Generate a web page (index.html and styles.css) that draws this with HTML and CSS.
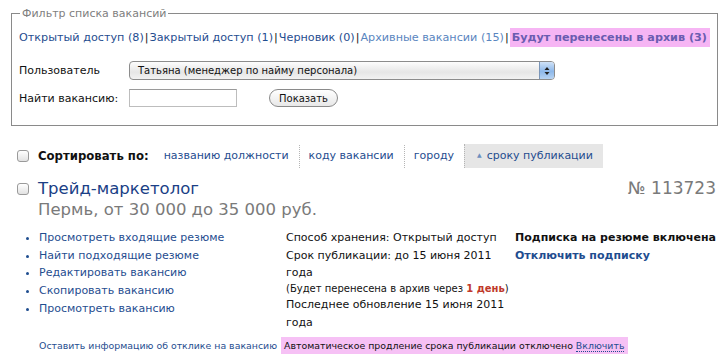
FILE: index.html
```html
<!DOCTYPE html>
<html lang="ru">
<head>
  <meta charset="UTF-8">
  <title>Вакансии</title>
  <link rel="stylesheet" href="styles.css">
</head>
<body>
<div class="page">

  <!-- Filter -->
  <fieldset class="filter">
    <legend>Фильтр списка вакансий</legend>
    <div class="tabs">
      <a href="#">Открытый доступ (8)</a><span class="sep">|</span><a href="#">Закрытый доступ (1)</a><span class="sep">|</span><a href="#">Черновик (0)</a><span class="sep">|</span><a href="#" class="archive">Архивные вакансии (15)</a><span class="sep">|</span><a href="#" class="soon">Будут перенесены в архив (3)</a>
    </div>
    <div class="field">
      <label>Пользователь</label>
      <div class="select">
        <span class="value">Татьяна (менеджер по найму персонала)</span>
        <span class="arrows">
          <svg width="6" height="10" viewBox="0 0 6 10"><path d="M3 1 L5.5 4 H0.5 Z M3 9 L5.5 6 H0.5 Z" fill="#222"/></svg>
        </span>
      </div>
    </div>
    <div class="field">
      <label>Найти вакансию:</label>
      <input type="text" class="search">
      <button class="btn">Показать</button>
    </div>
  </fieldset>

  <!-- Sort -->
  <div class="sort">
    <span class="check"></span>
    <b class="sort-label">Сортировать по:</b>
    <a href="#" class="sort-item">названию должности</a>
    <a href="#" class="sort-item">коду вакансии</a>
    <a href="#" class="sort-item">городу</a>
    <a href="#" class="sort-item active"><span class="tri">&#9650;</span>сроку публикации</a>
  </div>

  <!-- Vacancy -->
  <div class="vacancy">
    <div class="vac-head">
      <span class="check"></span>
      <div class="vac-title">
        <a href="#" class="title">Трейд-маркетолог</a>
        <div class="sub">Пермь, от 30 000 до 35 000 руб.</div>
      </div>
      <div class="num">№ 113723</div>
    </div>

    <div class="vac-body">
      <ul class="actions">
        <li><a href="#">Просмотреть входящие резюме</a></li>
        <li><a href="#">Найти подходящие резюме</a></li>
        <li><a href="#">Редактировать вакансию</a></li>
        <li><a href="#">Скопировать вакансию</a></li>
        <li><a href="#">Просмотреть вакансию</a></li>
      </ul>
      <div class="info">
        <p>Способ хранения: Открытый доступ</p>
        <p>Срок публикации: до 15 июня 2011 года</p>
        <p class="note">(Будет перенесена в архив через <b class="red">1 день</b>)</p>
        <p>Последнее обновление 15 июня 2011 года</p>
      </div>
      <div class="subscr">
        <b>Подписка на резюме включена</b>
        <a href="#">Отключить подписку</a>
      </div>
    </div>

    <div class="vac-foot">
      <a href="#" class="feedback">Оставить информацию об отклике на вакансию</a>
      <span class="autoext">Автоматическое продление срока публикации отключено <a href="#">Включить</a></span>
    </div>
  </div>

</div>
</body>
</html>
```

FILE: styles.css
```css
body {
  margin: 0;
  background: #fff;
  font-family: "DejaVu Sans", Verdana, sans-serif;
  font-size: 11px;
  color: #111;
}
a {
  color: #1f4d8f;
  text-decoration: none;
}
.page {
  padding: 7px 11px 0 11px;
}

/* Filter */
.filter {
  margin: 0;
  border: 1px solid #8a8a8a;
  padding: 8px 7px 18px 7px;
}
.filter legend {
  color: #808080;
  padding: 0 2px;
  margin-left: 1px;
}
.tabs {
  display: flex;
  align-items: center;
  white-space: nowrap;
  font-size: 11.2px;
}
.tabs .sep {
  color: #111;
  padding: 0 1px;
}
.tabs .archive {
  color: #5a86c0;
}
.tabs .soon {
  background: #f6b5f4;
  color: #6a5cb0;
  font-weight: bold;
  padding: 3px 3px 3px 2px;
}
.field {
  display: flex;
  align-items: center;
  margin-top: 9px;
}
.tabs + .field {
  margin-top: 14px;
}
.field label {
  width: 110px;
}
.select {
  display: flex;
  align-items: center;
  width: 424px;
  height: 17px;
  border: 1px solid #8c8c8c;
  border-radius: 4px;
  background: linear-gradient(#fdfdfd, #e6e6e6 60%, #f2f2f2);
  font-size: 10px;
  overflow: hidden;
}
.select .value {
  flex: 1;
  padding-left: 8px;
}
.arrows {
  display: flex;
  align-items: center;
  justify-content: center;
  width: 14px;
  height: 17px;
  border-left: 1px solid #7a95b8;
  background: linear-gradient(#cfe2f7, #8db8ea 55%, #b8d4f3);
}
.search {
  width: 106px;
  height: 16px;
  margin: 0;
  border: 1px solid #bdbdbd;
  border-top-color: #9a9a9a;
  padding: 0;
}
.btn {
  margin-left: 32px;
  height: 18px;
  padding: 0 9px;
  border: 1px solid #8a8a8a;
  border-radius: 9px;
  background: linear-gradient(#ffffff, #e8e8e8);
  font-family: inherit;
  font-size: 10px;
  color: #111;
}

/* Sort */
.check {
  display: inline-block;
  width: 10px;
  height: 10px;
  border: 1px solid #9a9a9a;
  border-radius: 3px;
  background: linear-gradient(#ffffff, #e2e2e2);
  flex: none;
}
.sort {
  display: flex;
  align-items: center;
  margin-top: 18px;
  padding-left: 6px;
}
.sort-label {
  margin-left: 9px;
  margin-right: 6px;
  font-size: 11.7px;
}
.sort-item {
  padding: 4px 10px 5px 9px;
  line-height: 14px;
  border-left: 1px dotted #b5b5b5;
}
.sort-label + .sort-item {
  border-left: none;
}
.sort-item.active {
  background: #e6e6e6;
  padding-left: 12px;
}
.tri {
  font-size: 6px;
  color: #6c8fbf;
  margin-right: 5px;
  vertical-align: 2px;
}

/* Vacancy */
.vacancy {
  margin-top: 10px;
}
.vac-head {
  display: flex;
  align-items: flex-start;
  padding-left: 6px;
}
.vac-head .check {
  margin-top: 5px;
}
.vac-title {
  margin-left: 9px;
  font-size: 16.5px;
  line-height: 21px;
}
.title {
  color: #1b3f86;
}
.sub {
  color: #7a7a7a;
}
.num {
  margin-left: auto;
  font-size: 17px;
  line-height: 21px;
  color: #7a7a7a;
}
.vac-body {
  display: grid;
  grid-template-columns: 275px 229px 1fr;
  margin-top: 9px;
  line-height: 17.7px;
}
.actions {
  margin: 0;
  padding-left: 28px;
  list-style: disc;
}
.actions li::marker {
  color: #1f4d8f;
}
.info p {
  margin: 0;
}
.info .note {
  font-size: 10px;
  line-height: 14px;
}
.red {
  color: #c0392b;
}
.subscr {
  display: flex;
  flex-direction: column;
  font-size: 11px;
  font-weight: bold;
  white-space: nowrap;
}
.vac-foot {
  display: flex;
  align-items: center;
  margin-top: 5px;
  padding-left: 28px;
  font-size: 9.4px;
}
.autoext {
  margin-left: 4px;
  padding: 3px 4px 3px 3px;
  background: #f6c1f5;
}
.autoext a {
  border-bottom: 1px dotted #1f4d8f;
}
```
